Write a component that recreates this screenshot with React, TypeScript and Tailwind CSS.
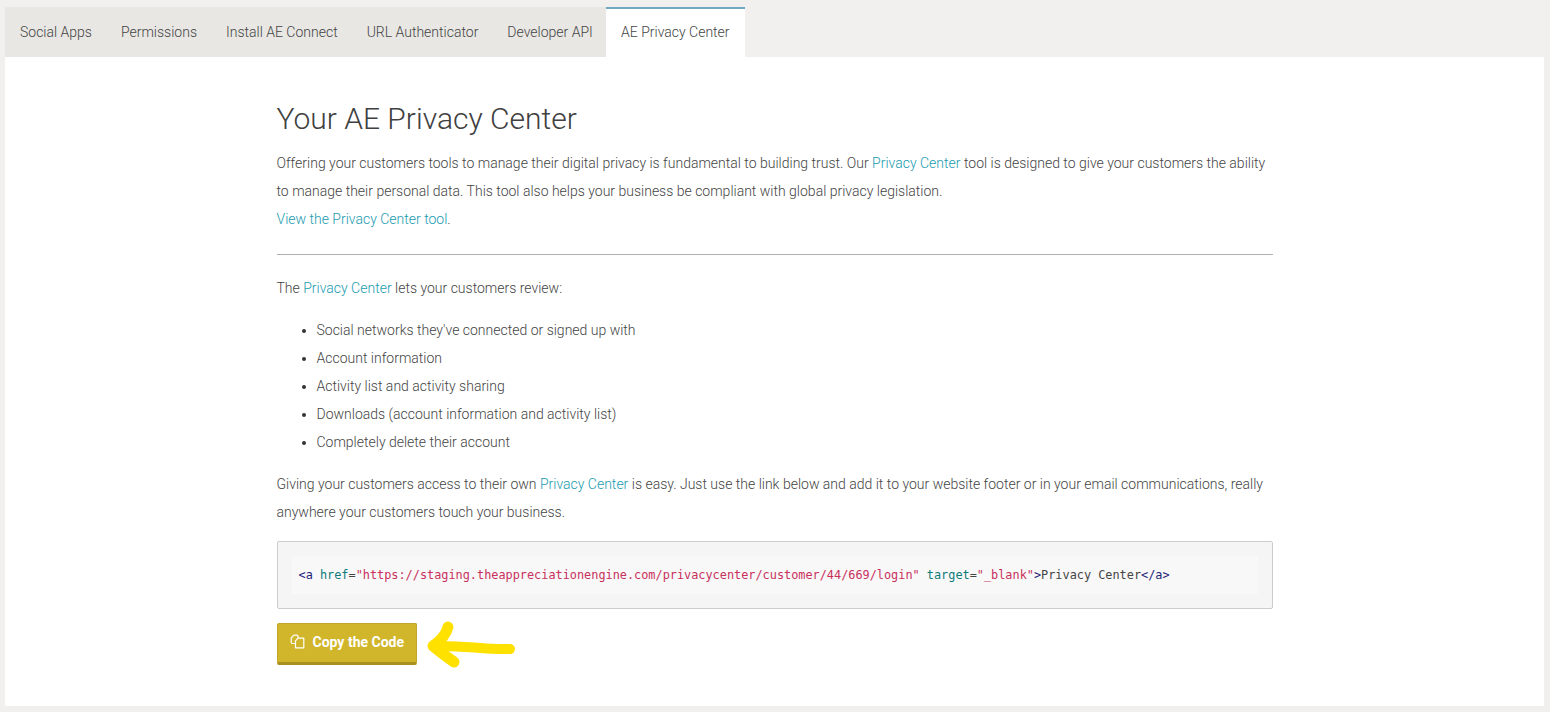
const tabs = ["Social Apps", "Permissions", "Install AE Connect", "URL Authenticator", "Developer API"];

const bullets = [
  "Social networks they've connected or signed up with",
  "Account information",
  "Activity list and activity sharing",
  "Downloads (account information and activity list)",
  "Completely delete their account",
];

function PrivacyLink({ children }: { children: string }) {
  return <a className="text-[#1a9bb0]">{children}</a>;
}

function CodeLine() {
  return (
    <code className="font-['DejaVu_Sans_Mono',monospace] text-[11.86px] leading-[38px] whitespace-pre">
      <span className="text-[#1f1f7a]">&lt;a</span>{" "}
      <span className="text-[#0f7a7a]">href</span>
      <span className="text-[#444]">=</span>
      <span className="text-[#c9305c]">"https://staging.theappreciationengine.com/privacycenter/customer/44/669/login"</span>{" "}
      <span className="text-[#0f7a7a]">target</span>
      <span className="text-[#444]">=</span>
      <span className="text-[#c9305c]">"_blank"</span>
      <span className="text-[#1f1f7a]">&gt;</span>
      <span className="text-[#444]">Privacy Center</span>
      <span className="text-[#1f1f7a]">&lt;/a&gt;</span>
    </code>
  );
}

export default function App() {
  return (
    <div className="h-[712px] overflow-hidden bg-[#f1f0ee] px-[5px] pt-[7px] font-['Roboto',sans-serif] text-[14px] font-light text-[#444]">
      <nav className="flex h-[50px]">
        <div className="flex bg-[#e8e7e3] pl-[15px]">
          {tabs.map((t) => (
            <a key={t} className="mr-[29px] pt-[15px] leading-5 text-[#444] last:mr-[13px]">
              {t}
            </a>
          ))}
        </div>
        <a className="w-[139px] border-t-2 border-[#6fa8c0] bg-white pt-[13px] text-center leading-5">AE Privacy Center</a>
      </nav>
      <main className="h-[649px] w-[1539px] bg-white pl-[271.5px] pt-[42px]">
        <div className="w-[996.5px]">
          <h1 className="text-[30px] leading-[40px] font-light text-[#404040]">Your AE Privacy Center</h1>
          <p className="mt-[10px] leading-[28px]">
            Offering your customers tools to manage their digital privacy is fundamental to building trust. Our{" "}
            <PrivacyLink>Privacy Center</PrivacyLink> tool is designed to give your customers the ability to manage
            their personal data. This tool also helps your business be compliant with global privacy legislation.
            <br />
            <PrivacyLink>View the Privacy Center tool</PrivacyLink>.
          </p>
          <hr className="mt-[21px] border-t border-[#b0b0b0]" />
          <p className="mt-[19px] leading-[28px]">
            The <PrivacyLink>Privacy Center</PrivacyLink> lets your customers review:
          </p>
          <ul className="mt-[14px] list-disc pl-10 leading-[28px] marker:text-[#333]">
            {bullets.map((b) => (
              <li key={b}>{b}</li>
            ))}
          </ul>
          <p className="mt-[14px] leading-[28px]">
            Giving your customers access to their own <PrivacyLink>Privacy Center</PrivacyLink> is easy. Just use the
            link below and add it to your website footer or in your email communications, really anywhere your customers
            touch your business.
          </p>
          <div className="mt-[15px] h-[68px] rounded-[2px] border border-[#cccccc] bg-[#f5f5f5] p-[14px]">
            <div className="h-[38px] bg-[#f8f8f8] pl-[7px]">
              <CodeLine />
            </div>
          </div>
          <div className="relative mt-[14px]">
            <button className="flex h-[42px] w-[140px] items-center rounded-[2px] border border-[#c0a62a] border-b-[3px] border-b-[#a98f1f] bg-[#d1b62b] pb-[2px] pl-[12px] font-bold text-white">
              <svg viewBox="0 0 15 15" className="mr-[8px] mb-[2px] h-[15px] w-[15px]" fill="none" stroke="#fff" strokeWidth="1.2" strokeLinejoin="round">
                <path d="M5 9.5H2.4Q1.2 9.5 1.2 8.3V4L4 1.2H6.8Q8 1.2 8 2.4V4" />
                <path d="M5.5 6.8L8 4.2H13.8V13.8H5.5Z" />
              </svg>
              <span className="text-[14px]">Copy the Code</span>
            </button>
            <svg viewBox="0 0 100 60" className="absolute top-[-10px] left-[146px] h-[60px] w-[100px]" fill="none" stroke="#ffe100" strokeLinecap="round" strokeLinejoin="round">
              <path d="M25 14C23 22 17 28 10 33C16 38 24 44 31 49" strokeWidth="11" />
              <path d="M12 33C40 32 62 37 87 36" strokeWidth="10" />
            </svg>
          </div>
        </div>
      </main>
    </div>
  );
}
